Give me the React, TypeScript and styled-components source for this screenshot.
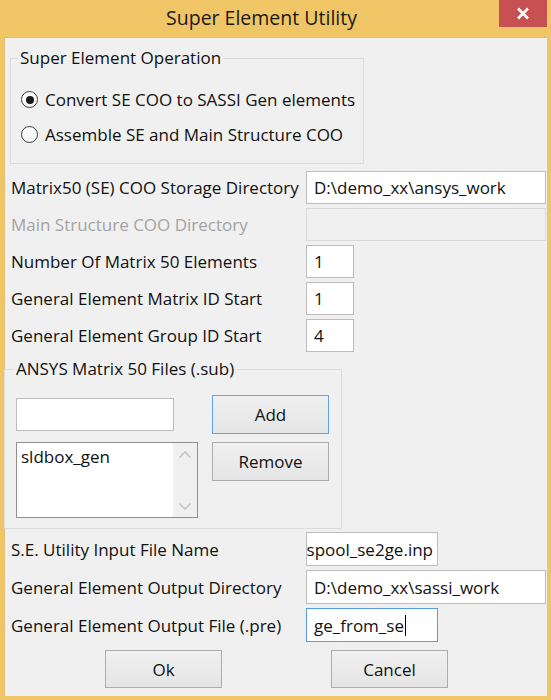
import * as React from "react";
import styled, { createGlobalStyle } from "styled-components";

const GlobalStyle = createGlobalStyle`
  html, body {
    margin: 0;
    padding: 0;
    background: #ffffff;
  }
  * {
    box-sizing: border-box;
  }
`;

const FONT = `"Open Sans", "Noto Sans", "Liberation Sans", sans-serif`;

const Window = styled.div`
  width: 551px;
  height: 700px;
  background: #f0c566;
  display: flex;
  flex-direction: column;
  font-family: ${FONT};
  font-size: 17px;
  color: #111;
`;

const TitleBar = styled.div`
  height: 37px;
  display: grid;
  grid-template-columns: 1fr auto 1fr;
  align-items: start;
`;

const Title = styled.div`
  grid-column: 2;
  margin-right: 28px;
  font-size: 19.5px;
  line-height: 36px;
  color: #1a1a1a;
`;

const CloseButton = styled.div`
  grid-column: 3;
  justify-self: end;
  width: 48px;
  height: 27px;
  margin-right: 4px;
  background: #c75050;
  display: flex;
  align-items: center;
  justify-content: center;
`;

const Client = styled.div`
  flex: 1;
  margin: 0 4px 4px;
  background: #f0f0f0;
  border: 1px solid #e2bd6a;
  border-width: 1px 0 0 1px;
  padding: 9px 0 0 0;
  display: flex;
  flex-direction: column;
`;

const GroupBox = styled.fieldset<{ $width: number; $left: number; $mt: number }>`
  margin: ${(p) => p.$mt}px 0 0 ${(p) => p.$left}px;
  width: ${(p) => p.$width}px;
  border: 1px solid #dcdcdc;
  padding: 0;
  min-width: 0;
`;

const Legend = styled.legend<{ $ml: number }>`
  margin-left: ${(p) => p.$ml}px;
  padding: 0 2px;
  line-height: 22px;
`;

const RadioList = styled.div`
  padding: 13px 10px 11px;
  display: flex;
  flex-direction: column;
`;

const RadioRow = styled.label`
  height: 35px;
  display: flex;
  align-items: center;
  gap: 7px;
  white-space: nowrap;
`;

const RadioCircle = styled.span<{ $checked?: boolean }>`
  flex: none;
  width: 17px;
  height: 17px;
  border-radius: 50%;
  border: 1px solid #3c3c3c;
  background: linear-gradient(#ffffff, #f4f4f4);
  display: flex;
  align-items: center;
  justify-content: center;
  &::after {
    content: "";
    width: 8px;
    height: 8px;
    border-radius: 50%;
    background: ${(p) => (p.$checked ? "#1a1a1a" : "transparent")};
  }
`;

const FormGrid = styled.div<{ $mt: number; $row: number }>`
  margin: ${(p) => p.$mt}px 1px 0 6px;
  display: grid;
  grid-template-columns: 295px 1fr;
  grid-auto-rows: ${(p) => p.$row}px;
  row-gap: 4px;
  align-items: center;
`;

const Label = styled.span<{ $disabled?: boolean }>`
  white-space: nowrap;
  color: ${(p) => (p.$disabled ? "#a3a3a3" : "#111")};
`;

const TextBox = styled.div<{
  $width?: number;
  $disabled?: boolean;
  $focused?: boolean;
  $end?: boolean;
}>`
  width: ${(p) => (p.$width ? `${p.$width}px` : "100%")};
  height: 100%;
  border: 1px solid
    ${(p) => (p.$focused ? "#569de5" : p.$disabled ? "#d9d9d9" : "#bdbdbd")};
  background: ${(p) => (p.$disabled ? "#f0f0f0" : "#fff")};
  padding: 0 ${(p) => (p.$end ? 4 : 7)}px 0 7px;
  display: flex;
  align-items: center;
  justify-content: ${(p) => (p.$end ? "flex-end" : "flex-start")};
  overflow: hidden;
  white-space: nowrap;
`;

const Caret = styled.span`
  display: inline-block;
  flex: none;
  width: 1px;
  height: 21px;
  background: #000;
  margin-left: 1px;
`;

const FilesBody = styled.div`
  padding: 15px 12px 10px 11px;
  display: grid;
  grid-template-columns: 182px 117px;
  grid-template-rows: 39px 76px;
  column-gap: 14px;
  row-gap: 8px;
`;

const SmallInput = styled.div`
  width: 158px;
  height: 33px;
  align-self: center;
  border: 1px solid #bdbdbd;
  background: #fff;
`;

const ListBox = styled.div`
  border: 1px solid #8f8f8f;
  background: #fff;
  display: flex;
`;

const ListItems = styled.div`
  flex: 1;
  padding: 3px 4px;
  line-height: 22px;
`;

const ScrollBar = styled.div`
  width: 24px;
  background: #f0f0f0;
  display: flex;
  flex-direction: column;
  justify-content: space-between;
  align-items: center;
  padding: 7px 0 6px;
`;

const Button = styled.div<{ $default?: boolean; $height?: number }>`
  width: 117px;
  height: ${(p) => p.$height ?? 39}px;
  align-self: start;
  border: 1px solid ${(p) => (p.$default ? "#5ca4ec" : "#acacac")};
  background: linear-gradient(#f0f0f0, #e5e5e5);
  display: flex;
  align-items: center;
  justify-content: center;
  color: #111;
`;

const ButtonRow = styled.div`
  margin-top: 8px;
  display: flex;
  padding-left: 100px;
  gap: 109px;
`;

const Chevron = ({ up }: { up?: boolean }) => (
  <svg width="14" height="9" viewBox="0 0 14 9">
    <path
      d={up ? "M1.5 7.5 L7 2 L12.5 7.5" : "M1.5 1.5 L7 7 L12.5 1.5"}
      fill="none"
      stroke="#c4c4c4"
      strokeWidth="1.6"
    />
  </svg>
);

const App = () => {
  return (
    <>
      <GlobalStyle />
      <Window>
        <TitleBar>
          <Title>Super Element Utility</Title>
          <CloseButton>
            <svg width="14" height="13" viewBox="0 0 14 13">
              <path
                d="M2 1.5 L12 11.5 M12 1.5 L2 11.5"
                stroke="#fff"
                strokeWidth="2.6"
              />
            </svg>
          </CloseButton>
        </TitleBar>
        <Client>
          <GroupBox $width={354} $left={5} $mt={0}>
            <Legend $ml={7}>Super Element Operation</Legend>
            <RadioList>
              <RadioRow>
                <RadioCircle $checked />
                Convert SE COO to SASSI Gen elements
              </RadioRow>
              <RadioRow>
                <RadioCircle />
                Assemble SE and Main Structure COO
              </RadioRow>
            </RadioList>
          </GroupBox>

          <FormGrid $mt={7} $row={33}>
            <Label>Matrix50 (SE) COO Storage Directory</Label>
            <TextBox>D:\demo_xx\ansys_work</TextBox>
            <Label $disabled>Main Structure COO Directory</Label>
            <TextBox $disabled />
            <Label>Number Of Matrix 50 Elements</Label>
            <TextBox $width={48}>1</TextBox>
            <Label>General Element Matrix ID Start</Label>
            <TextBox $width={48}>1</TextBox>
            <Label>General Element Group ID Start</Label>
            <TextBox $width={48}>4</TextBox>
          </FormGrid>

          <GroupBox $width={338} $left={-1} $mt={6}>
            <Legend $ml={9}>ANSYS Matrix 50 Files (.sub)</Legend>
            <FilesBody>
              <SmallInput />
              <Button $default>Add</Button>
              <ListBox>
                <ListItems>sldbox_gen</ListItems>
                <ScrollBar>
                  <Chevron up />
                  <Chevron />
                </ScrollBar>
              </ListBox>
              <Button>Remove</Button>
            </FilesBody>
          </GroupBox>

          <FormGrid $mt={3} $row={34}>
            <Label>S.E. Utility Input File Name</Label>
            <TextBox $width={132} $end>
              spool_se2ge.inp
            </TextBox>
            <Label>General Element Output Directory</Label>
            <TextBox>D:\demo_xx\sassi_work</TextBox>
            <Label>General Element Output File (.pre)</Label>
            <TextBox $width={132} $focused>
              ge_from_se
              <Caret />
            </TextBox>
          </FormGrid>

          <ButtonRow>
            <Button $height={38}>Ok</Button>
            <Button $height={38}>Cancel</Button>
          </ButtonRow>
        </Client>
      </Window>
    </>
  );
};

export default App;
